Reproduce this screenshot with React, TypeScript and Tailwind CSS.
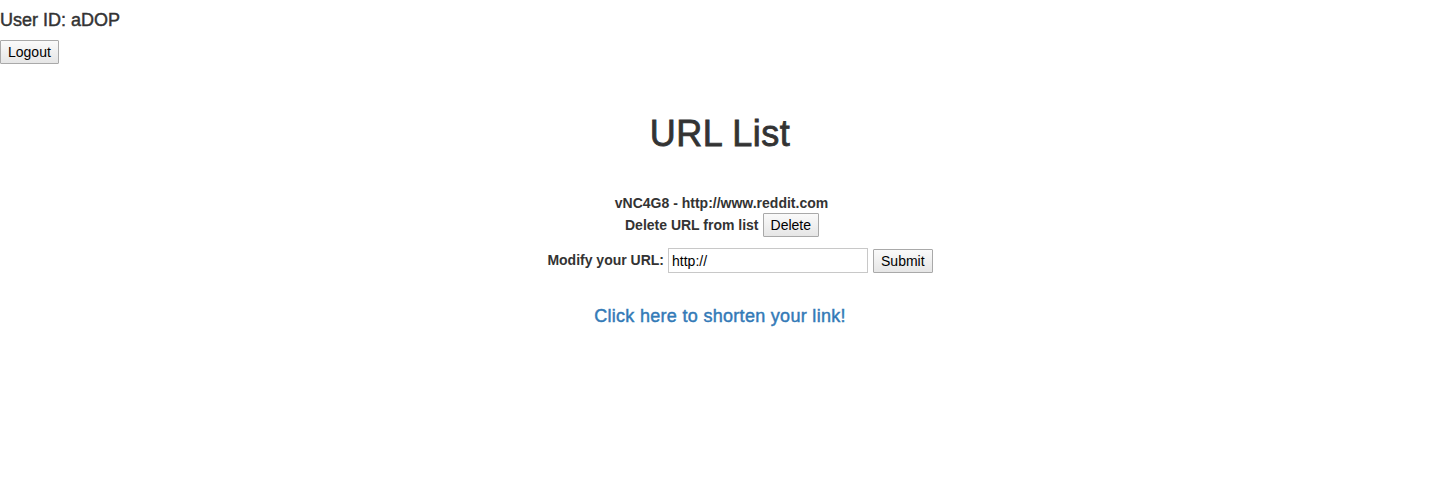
import React from "react";

const FONT = "font-['Liberation_Sans',Arial,sans-serif]";
const BTN =
  "h-6 px-[7px] border border-[#a9a9a9] bg-gradient-to-b from-[#fafafa] to-[#e6e6e6] text-[14px] text-black leading-none rounded-[1px]";
// Liberation Sans has no 500 weight, so thicken the strokes a little
const MEDIUM = "[-webkit-text-stroke:0.45px_currentColor]";

export default function App() {
  return (
    <div className={`min-h-[493px] bg-white text-[#333] ${FONT}`}>
      <h4 className={`pt-[10px] text-[18px] leading-[20px] ${MEDIUM}`}>User ID: aDOP</h4>
      <div className="mt-[10px]">
        <button className={BTN}>Logout</button>
      </div>

      <div className="flex flex-col items-center">
        <h1 className="mt-[50px] text-[36px] leading-[40px] tracking-[0.5px] [-webkit-text-stroke:0.8px_currentColor]">
          URL List
        </h1>

        <div className="mt-[39px] flex flex-col items-center text-[14px] font-bold">
          <div className="leading-5 pl-[3px]">vNC4G8 - http://www.reddit.com</div>
          <div className="flex items-center gap-1 pl-[4px]">
            <span>Delete URL from list</span>
            <button className={`${BTN} font-normal`}>Delete</button>
          </div>
          <form className="mt-[11px] pl-[40px] flex items-center gap-1">
            <label>Modify your URL:</label>
            <input
              className="w-[200px] h-[25px] border border-[#c8c8c8] px-[3px] text-[14px] font-normal text-black outline-none"
              defaultValue="http://"
            />
            <button type="button" className={`${BTN} ml-[1px] font-normal`}>
              Submit
            </button>
          </form>
        </div>

        <a href="#" className={`mt-[33px] text-[18px] leading-5 tracking-[0.3px] text-[#337ab7] ${MEDIUM}`}>
          Click here to shorten your link!
        </a>
      </div>
    </div>
  );
}
